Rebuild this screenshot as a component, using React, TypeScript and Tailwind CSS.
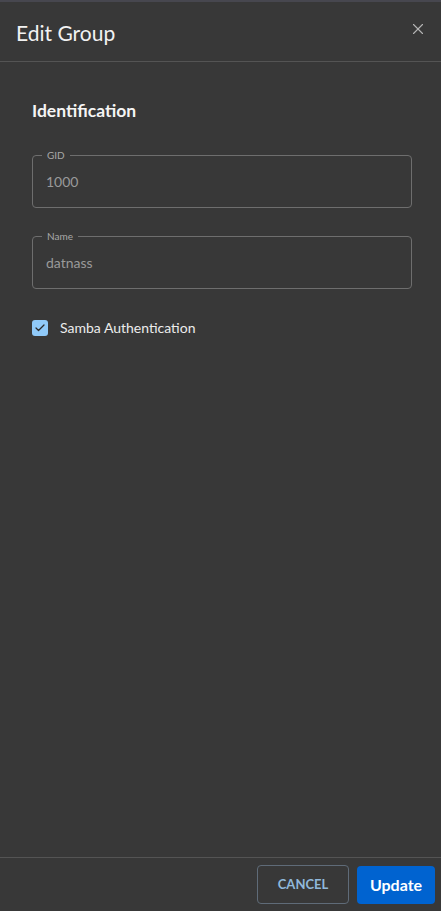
import { X, Check } from 'lucide-react';

const fields = [
    { label: "GID", value: "1000" },
    { label: "Name", value: "datnass" },
];

function OutlinedField({ label, value }: { label: string; value: string }) {
    return (
        <div className="relative h-[53px] rounded-[4px] border border-[#6e6e6e]">
            <span className="absolute -top-[8px] left-[9px] bg-[#383838] px-[5px] text-[10px] leading-[14px] text-[#a8a8a8]">{label}</span>
            <div className="flex h-full items-center px-[13px] text-[14px] text-[#9a9a9a]">{value}</div>
        </div>
    );
}

export default function App() {
    return (
        <div className="flex h-[911px] w-[441px] flex-col border-t-2 border-[#47474f] bg-[#383838] font-['Lato','Noto_Sans',sans-serif] text-white">
            {/* Header */}
            <div className="flex h-[60px] items-center justify-between border-b border-[#545454] pl-4 pr-[14px]">
                <h1 className="pt-[3px] text-[21px] font-normal text-[#f2f2f2]">Edit Group</h1>
                <button className="-mt-[6px] text-[#b5b5b5]"><X size={18} strokeWidth={1.5} /></button>
            </div>
            {/* Body */}
            <div className="flex-1 pl-8 pr-[29px] pt-[36px]">
                <h2 className="text-[17.5px] font-bold leading-[25px] text-[#f5f5f5]">Identification</h2>
                <div className="mt-[32px] flex flex-col gap-7">
                    {fields.map((f) => (
                        <OutlinedField key={f.label} label={f.label} value={f.value} />
                    ))}
                </div>
                <label className="mt-[28px] flex items-center gap-3">
                    <span className="flex h-4 w-4 items-center justify-center rounded-[3px] bg-[#90caf9] text-[#2a2a2a]">
                        <Check size={12} strokeWidth={2.5} />
                    </span>
                    <span className="text-[14px] text-[#ececec]">Samba Authentication</span>
                </label>
            </div>
            {/* Footer */}
            <div className="flex h-[54px] items-center justify-end gap-2 border-t border-[#545454] pr-[6px]">
                <button className="h-[39px] w-[92px] rounded-[4px] border border-[#5f6b78] text-[13px] font-bold text-[#90b8dc]">CANCEL</button>
                <button className="h-[38px] w-[78px] rounded-[4px] bg-[#0063d0] text-[16px] font-bold text-white">Update</button>
            </div>
        </div>
    );
}
